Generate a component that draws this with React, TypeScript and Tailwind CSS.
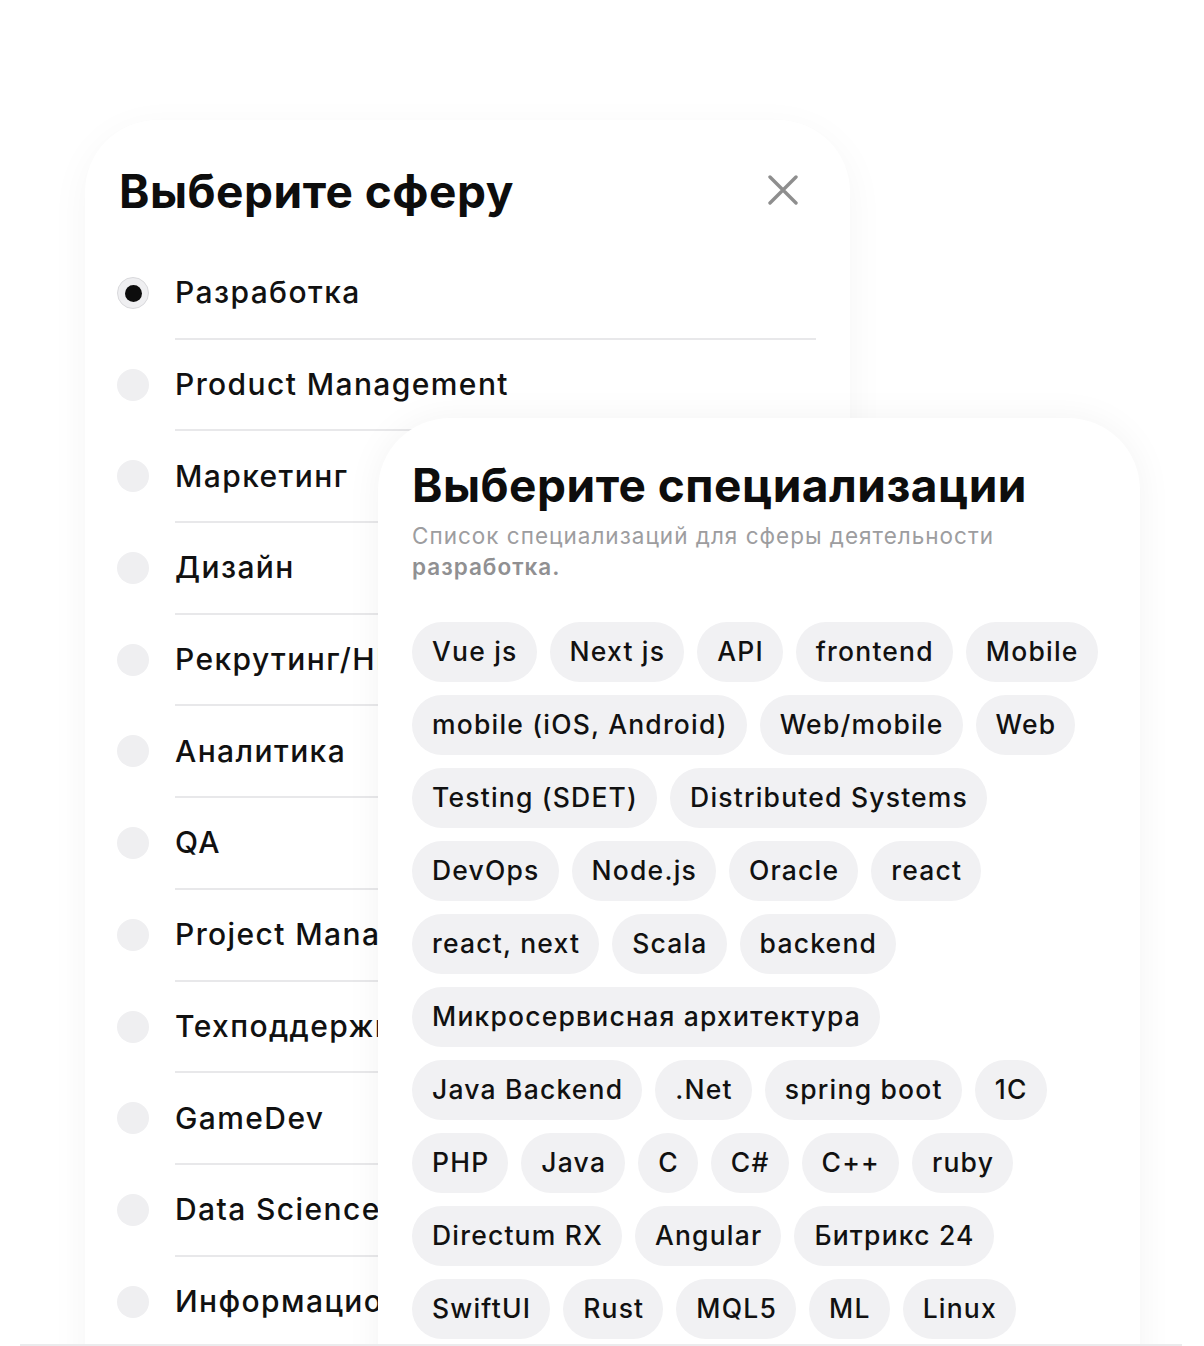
import React from "react";

const spheres = [
  "Разработка",
  "Product Management",
  "Маркетинг",
  "Дизайн",
  "Рекрутинг/HR",
  "Аналитика",
  "QA",
  "Project Management",
  "Техподдержка",
  "GameDev",
  "Data Science",
  "Информационная безопасность",
];

const chipRows = [
  ["Vue js", "Next js", "API", "frontend", "Mobile"],
  ["mobile (iOS, Android)", "Web/mobile", "Web"],
  ["Testing (SDET)", "Distributed Systems"],
  ["DevOps", "Node.js", "Oracle", "react"],
  ["react, next", "Scala", "backend"],
  ["Микросервисная архитектура"],
  ["Java Backend", ".Net", "spring boot", "1С"],
  ["PHP", "Java", "C", "C#", "C++", "ruby"],
  ["Directum RX", "Angular", "Битрикс 24"],
  ["SwiftUI", "Rust", "MQL5", "ML", "Linux"],
];

function CloseIcon() {
  return (
    <svg width="30" height="30" viewBox="0 0 30 30" fill="none">
      <path
        d="M2 2L28 28M28 2L2 28"
        stroke="#8e8e8e"
        strokeWidth="3.4"
        strokeLinecap="round"
      />
    </svg>
  );
}

function SphereRow({ label, selected }: { label: string; selected: boolean }) {
  return (
    <div className="flex items-start">
      {selected ? (
        <div className="mt-[29px] flex h-8 w-8 shrink-0 items-center justify-center rounded-full border border-[#d9d9dc] bg-[#efeff1]">
          <div className="h-[17px] w-[17px] rounded-full bg-[#0d0d0d]" />
        </div>
      ) : (
        <div className="mt-[29px] h-8 w-8 shrink-0 rounded-full bg-[#efeff1]" />
      )}
      <div className="ml-[26px] flex h-[91.7px] flex-1 items-center whitespace-nowrap border-b-2 border-[#e8e8ea] text-[30px] font-medium tracking-[1.4px] text-[#111]">
        {label}
      </div>
    </div>
  );
}

export default function App() {
  return (
    <div className="relative w-[1204px] bg-white font-['Inter',sans-serif]">
      <div className="relative h-[1344px] overflow-hidden pl-[85px] pt-[120px]">
        {/* back card */}
        <div className="h-[1300px] w-[765px] rounded-t-[72px] bg-white pl-[32px] pr-[34px] pt-[44px] shadow-[0_10px_40px_rgba(0,0,0,0.045)]">
          <div className="flex items-center justify-between">
            <h1 className="pl-[2px] text-[46px] font-bold leading-[54px] tracking-[0.5px] text-[#0d0d0d]">
              Выберите сферу
            </h1>
            <div className="mr-[18px] mt-[-2px]">
              <CloseIcon />
            </div>
          </div>
          <div className="mt-[30px]">
            {spheres.map((s, i) => (
              <SphereRow key={s} label={s} selected={i === 0} />
            ))}
          </div>
        </div>

        {/* front card */}
        <div className="absolute left-[378px] top-[418px] h-[1000px] w-[762px] rounded-t-[72px] bg-white pl-[34px] pr-[34px] pt-[40px] shadow-[0_0_36px_rgba(0,0,0,0.05)]">
          <h2 className="text-[46px] font-bold leading-[54px] tracking-[0.5px] text-[#0d0d0d]">
            Выберите специализации
          </h2>
          <p className="mt-[8px] text-[22.5px] leading-[31px] tracking-[1px] text-[#9d9d9f]">
            Список специализаций для сферы деятельности
            <br />
            <span className="font-semibold text-[#909092]">разработка.</span>
          </p>
          <div className="mt-[40px] flex flex-col gap-[13px]">
            {chipRows.map((row, i) => (
              <div key={i} className="flex gap-[13px]">
                {row.map((c) => (
                  <div
                    key={c}
                    className="flex h-[60px] items-center whitespace-nowrap rounded-full bg-[#f1f1f3] pl-[20px] pr-[19px] text-[26.5px] font-medium tracking-[1.2px] text-[#111]"
                  >
                    {c}
                  </div>
                ))}
              </div>
            ))}
          </div>
        </div>
      </div>
      <div className="ml-[20px] mr-[22px] h-[2px] bg-[#ebebed]" />
    </div>
  );
}
